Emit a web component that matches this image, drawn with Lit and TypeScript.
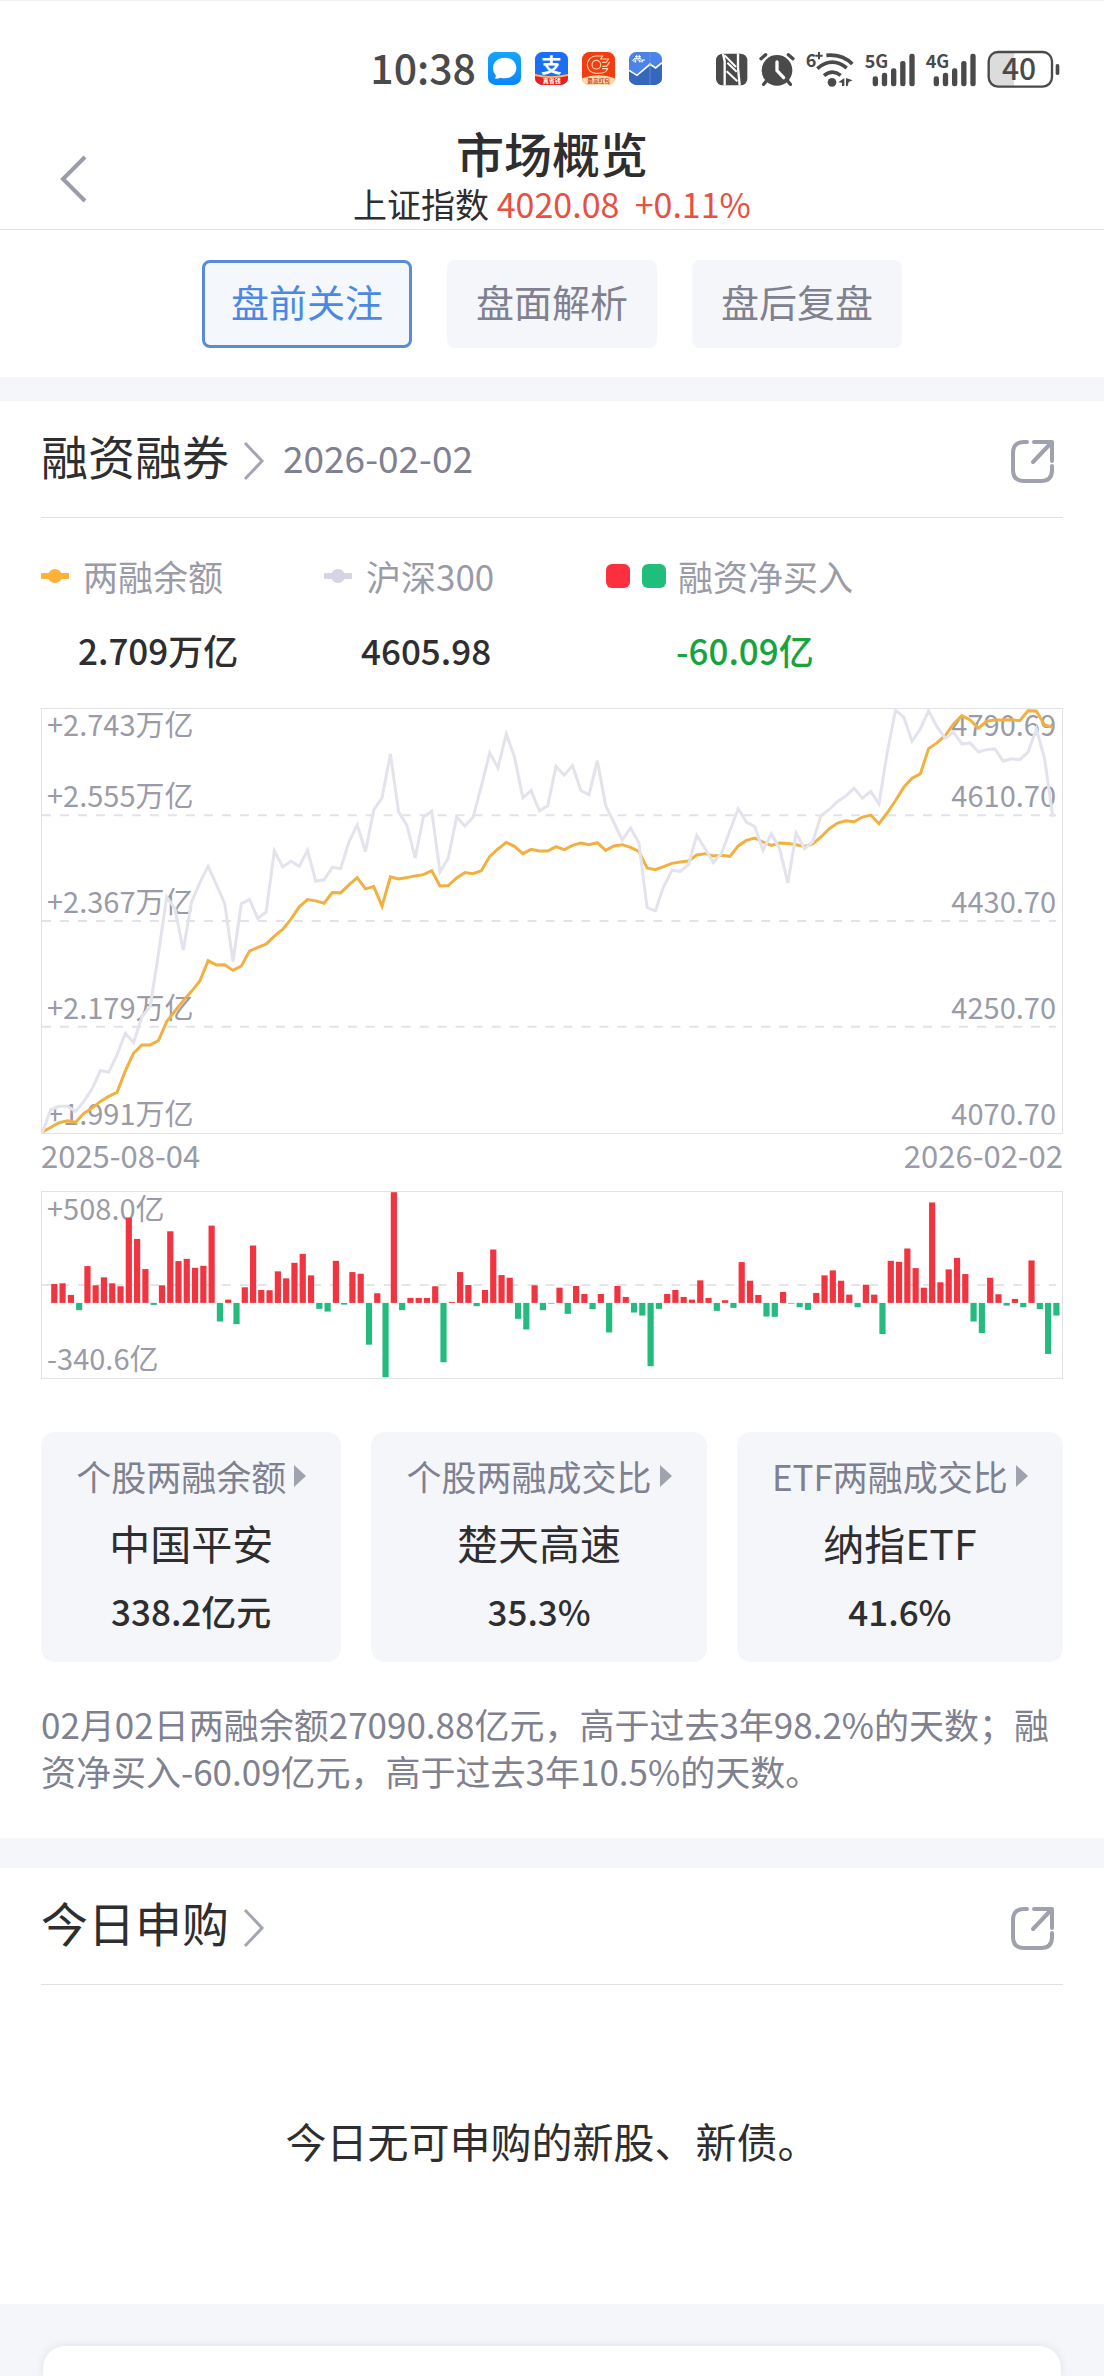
import { LitElement, html, svg, css, nothing } from "lit";
import { customElement, property, state } from "lit/decorators.js";
import { classMap } from "lit/directives/class-map.js";

/* Plot coordinates: both charts share a 1021-unit wide canvas, one sample per trading day. */
const PLOT_WIDTH = 1021;
const STEP = 8.29;
const UNIT = 3;

/* Depth below the top edge of the plot, in thirds of a unit. */
const BALANCE = [
  1272, 1258, 1244, 1238, 1243, 1216, 1200, 1180, 1165, 1153, 1088, 1035, 1010, 1010, 997, 940, 908, 877, 849, 818,
  757, 770, 769, 786, 773, 728, 717, 707, 683, 663, 632, 595, 573, 577, 584, 552, 553, 529, 507, 541,
  534, 593, 505, 511, 507, 502, 498, 486, 532, 531, 508, 492, 495, 486, 443, 421, 401, 413, 435, 422,
  427, 427, 414, 423, 410, 403, 408, 402, 425, 412, 408, 416, 428, 478, 483, 474, 464, 460, 457, 439,
  435, 442, 440, 443, 412, 395, 388, 400, 410, 403, 404, 408, 413, 406, 385, 360, 343, 336, 339, 325,
  319, 345, 312, 275, 235, 208, 195, 119, 102, 80, 45, 20, 33, 58, 37, 33, 33, 32, 35, 5,
  6, 48, 55,
];

const CSI300 = [
  1272, 1205, 1195, 1195, 1210, 1180, 1142, 1087, 1092, 1040, 975, 1003, 925, 895, 735, 565, 600, 725, 580, 522,
  473, 528, 585, 760, 585, 573, 630, 611, 427, 475, 458, 473, 425, 518, 513, 476, 480, 400, 348, 429,
  303, 267, 135, 310, 350, 448, 325, 307, 490, 448, 325, 352, 325, 230, 132, 177, 75, 145, 267, 245,
  306, 291, 173, 199, 170, 245, 258, 155, 290, 342, 394, 358, 401, 597, 607, 535, 485, 488, 468, 380,
  420, 462, 433, 365, 300, 340, 353, 425, 375, 420, 523, 373, 420, 400, 320, 302, 278, 262, 238, 268,
  248, 285, 130, 3, 25, 97, 60, 5, 53, 88, 70, 105, 102, 129, 122, 120, 157, 150, 152, 130,
  60, 150, 325,
];

const NET_BUY = [
  57, 59, 24, -22, 111, 53, 77, 59, 50, 257, 193, 102, -6, 53, 216, 126, 133, 106, 112, 233,
  -56, 10, -64, 47, 173, 39, 38, 95, 74, 121, 148, 83, -18, -26, 127, -5, 93, 88, -126, 29,
  -224, 334, -22, 15, 15, 15, 50, -179, 3, 93, 54, -10, 39, 161, 84, 76, -48, -80, 53, -22,
  -2, 46, -33, 51, 27, -19, 27, -89, 51, 18, -29, -38, -191, -18, 27, 39, 18, 10, 68, 15,
  -24, 8, -15, 123, 67, 24, -41, -42, 33, -2, -13, -21, 30, 83, 98, 67, 25, -13, 55, 25,
  -94, 127, 124, 164, 105, 46, 303, 62, 101, 136, 87, -56, -91, 76, 26, -8, 12, -13, 128, -19,
  -154, -38,
];

const toPoints = (depths: number[]) =>
  depths.map((d, i) => `${(0.5 + i * STEP).toFixed(1)},${(d / UNIT).toFixed(1)}`).join(" ");

const base = css`
  :host {
    display: block;
  }
  *,
  *::before,
  *::after {
    box-sizing: border-box;
  }
  button,
  a {
    font: inherit;
    color: inherit;
    background: none;
    border: 0;
    padding: 0;
    margin: 0;
    text-decoration: none;
    cursor: pointer;
  }
  svg {
    display: block;
    flex: none;
    overflow: visible;
  }
`;

@customElement("status-bar")
class StatusBar extends LitElement {
  static styles = [
    base,
    css`
      .bar {
        display: flex;
        justify-content: flex-end;
        align-items: center;
        height: 116px;
        padding: 20px 43px 0 0;
        border-top: 1px solid #f1f1f1;
        color: #4a4a4a;
      }
      .time {
        font-size: 41px;
        line-height: 60px;
        font-weight: 500;
        padding-bottom: 6px;
      }
      .apps {
        display: flex;
        gap: 14px;
        margin: 0 54px 0 12px;
      }
      .system {
        display: flex;
        gap: 11px;
      }
      text {
        font-family: "Noto Sans CJK SC", sans-serif;
      }
    `,
  ];

  private glyph(x: number, width: number, label: string, body: unknown) {
    return html`<svg
      width=${width / 3}
      height="38"
      viewBox="${x} 54 ${width} 114"
      role="img"
      aria-label=${label}
      fill="#4a4a4a"
    >
      ${body}
    </svg>`;
  }

  private signal(x: number, name: string) {
    const tops = [133, 122, 109, 87, 65];
    return this.glyph(
      x,
      150,
      name,
      svg`
        <text x=${x - 1} y="107" font-size="54" font-weight="700">${name}</text>
        ${tops.map((t, i) => svg`<rect x=${x + 23 + i * 27.5} y=${t} width="16" height=${163 - t} rx="7" />`)}
      `,
    );
  }

  render() {
    return html`
      <div class="bar">
        <span class="time">10:38</span>
        <div class="apps">
          <svg width="33" height="33" viewBox="0 0 99 99">
            <defs>
              <linearGradient id="msg" x1="0" y1="0" x2="0" y2="1">
                <stop offset="0" stop-color="#12a5ff" />
                <stop offset="1" stop-color="#0a86fa" />
              </linearGradient>
            </defs>
            <rect width="99" height="99" rx="22" fill="url(#msg)" />
            <path
              d="M50 17c20 0 35 13 35 31s-15 31-35 31c-5 0-9-1-13-2-5 3-11 4-17 3 3-3 4-7 3-11-5-5-8-12-8-21 0-18 15-31 35-31z"
              fill="#fff"
            />
          </svg>
          <svg width="33" height="33" viewBox="0 0 99 99">
            <defs><clipPath id="pay"><rect width="99" height="99" rx="22" /></clipPath></defs>
            <rect width="99" height="99" rx="22" fill="#1b6ff5" />
            <text x="49" y="62" font-size="62" font-weight="700" fill="#fff" text-anchor="middle">支</text>
            <g clip-path="url(#pay)">
              <path d="M0 66q49 13 99 0v33H0z" fill="#e9201f" />
              <path d="M0 66q49 13 99 0v6q-50 12-99 0z" fill="#ffb469" />
            </g>
            <text x="50" y="94" font-size="18" font-weight="700" fill="#fff" text-anchor="middle">真省钱</text>
          </svg>
          <svg width="33" height="33" viewBox="0 0 99 99">
            <defs><clipPath id="bank"><rect width="99" height="99" rx="22" /></clipPath></defs>
            <g clip-path="url(#bank)">
              <rect width="99" height="99" fill="#f23c12" />
              <g fill="none" stroke="#ffd9b0" stroke-width="3.5" stroke-linecap="round" stroke-linejoin="round">
                <circle cx="43" cy="38" r="13" />
                <path d="M62 12H42a26 26 0 1 0 0 52h10c14 0 22-6 25-14H62M62 12l-6 9h24l-8 10H62M82 31l-8 12H62" />
              </g>
              <path d="M0 79q49-18 99 0v20H0z" fill="#ffdcae" />
            </g>
            <text x="50" y="94" font-size="17" font-weight="700" fill="#d0442a" text-anchor="middle">最高红包</text>
          </svg>
          <svg width="33" height="33" viewBox="0 0 99 99">
            <defs><clipPath id="fund"><rect width="99" height="99" rx="22" /></clipPath></defs>
            <g clip-path="url(#fund)">
              <rect width="99" height="99" fill="#4a84ea" />
              <path d="M0 55L24 70 63 37l17 11 19-16v67H0z" fill="#3567bd" />
              <path d="M63 0v99" stroke="#6f9be8" stroke-width="2" />
              <path d="M0 55L24 70 63 37l17 11 19-16" fill="none" stroke="#fff" stroke-width="5" />
              <circle cx="63" cy="38" r="4" fill="#f2d36b" />
              <path
                d="M18 14h18M23 9v10M31 9v10M10 26l5-5v10M20 22v10M25 24h6v7M36 22v9M40 31v-7h8M15 20h22"
                fill="none"
                stroke="#fff"
                stroke-width="3"
              />
            </g>
          </svg>
        </div>
        <div class="system">
          ${this.glyph(
            48,
            96,
            "NFC",
            svg`<rect x="48" y="65" width="94" height="95" rx="20" />
              <g fill="none" stroke="#fff">
                <path d="M69 65l5 22v73" stroke-width="7" />
                <path d="M74 70l34 35M80 118l32 30M82 92l28 27" stroke-width="6" />
                <path d="M114 65v42l5 53" stroke-width="7" />
              </g>`,
          )}
          ${this.glyph(
            177,
            108,
            "闹钟",
            svg`<circle cx="231" cy="115" r="46" />
              <g fill="none" stroke="#4a4a4a" stroke-width="10" stroke-linecap="round">
                <path d="M183 80l14-12M265 68l14 12M199 147l-8 10M263 147l8 10" />
              </g>
              <path d="M231 90v26l20 21" fill="none" stroke="#fff" stroke-width="10" stroke-linecap="round" />`,
          )}
          ${this.glyph(
            315,
            144,
            "Wi-Fi",
            svg`<text x="314" y="106" font-size="54" font-weight="700">6</text>
              <path d="M343 71h22M354 60v22" stroke="#4a4a4a" stroke-width="6" />
              <g fill="none" stroke="#4a4a4a" stroke-width="11" stroke-linecap="butt">
                <path d="M376 70q48-4 78 26" />
                <path d="M349 110q43-38 88-2" />
                <path d="M369 131q25-21 50-1" />
              </g>
              <circle cx="393" cy="151" r="13" />
              <path d="M430 138v24h-7v-10l-11-1zM435 138l20 7-12 5-3 12h-5z" />`,
          )}
          ${this.signal(489, "5G")} ${this.signal(675, "4G")}
          ${this.glyph(
            861,
            222,
            "电量 40%",
            svg`<path d="M942 60h-50q-28 0-28 28v48q0 28 28 28h50z" fill="#dcdcdc" />
              <rect x="866" y="60" width="190" height="104" rx="28" fill="none" stroke="#4a4a4a" stroke-width="7" />
              <rect x="1067" y="96" width="11" height="33" rx="5" />
              <text x="957" y="145" font-size="90" font-weight="500" text-anchor="middle">40</text>`,
          )}
        </div>
      </div>
    `;
  }
}

@customElement("section-head")
class SectionHead extends LitElement {
  @property() heading = "";
  @property() date = "";

  static styles = [
    base,
    css`
      .head {
        display: flex;
        align-items: center;
        justify-content: space-between;
        height: 117px;
        padding: 4px 8px 0 0;
        border-bottom: 1px solid #e0e1e5;
      }
      .link {
        display: flex;
        align-items: center;
        gap: 14px;
      }
      .title {
        margin: 0;
        padding-bottom: 12px;
        font-size: 47px;
        line-height: 60px;
        font-weight: 400;
        color: #2e2e30;
      }
      .date {
        padding: 0 0 9px 4px;
        font-size: 37px;
        line-height: 48px;
        color: #7f8190;
      }
    `,
  ];

  render() {
    return html`
      <div class="head">
        <a class="link" href="#detail">
          <h2 class="title">${this.heading}</h2>
          <svg width="22" height="38" viewBox="0 0 22 38" fill="none" stroke="#a3a5b2" stroke-width="3">
            <path d="M2 1l17 18L2 37" />
          </svg>
          ${this.date ? html`<span class="date">${this.date}</span>` : nothing}
        </a>
        <button type="button" aria-label="分享">
          <svg width="44" height="44" viewBox="0 0 44 44" fill="none" stroke="#a0a1ae" stroke-width="4">
            <path d="M16 3h-3Q2 3 2 14v17q0 11 11 11h17q11 0 11-11v-4" stroke-linecap="round" />
            <path d="M23 3h18v19M41 3L22 23" stroke-linecap="round" stroke-linejoin="round" />
          </svg>
        </button>
      </div>
    `;
  }
}

@customElement("balance-chart")
class BalanceChart extends LitElement {
  static styles = [
    base,
    css`
      .plot {
        position: relative;
        height: 426px;
        border: 1px solid #e2e3e8;
        font-size: 29px;
        line-height: 28px;
        color: #9a9ba7;
      }
      .layer {
        position: absolute;
        inset: 0;
      }
      .bands {
        display: grid;
        grid-template-rows: repeat(4, 1fr);
        padding: 0 6px 0 5px;
      }
      .band {
        display: flex;
        justify-content: space-between;
        align-items: flex-end;
        padding-bottom: 7px;
      }
      .top {
        display: flex;
        flex-direction: column;
        justify-content: space-between;
        padding-bottom: 7px;
      }
      .row {
        display: flex;
        justify-content: space-between;
      }
      .dates {
        display: flex;
        justify-content: space-between;
        padding-top: 1px;
        font-size: 31px;
        line-height: 40px;
        color: #9a9ba7;
      }
      .canvas {
        width: 100%;
        height: 100%;
      }
    `,
  ];

  render() {
    return html`
      <div class="plot">
        <div class="layer bands">
          <div class="top">
            <div class="row"><span>+2.743万亿</span><span>4790.69</span></div>
            <div class="row"><span>+2.555万亿</span><span>4610.70</span></div>
          </div>
          <div class="band"><span>+2.367万亿</span><span>4430.70</span></div>
          <div class="band"><span>+2.179万亿</span><span>4250.70</span></div>
          <div class="band"><span>+1.991万亿</span><span>4070.70</span></div>
        </div>
        <div class="layer">
          <svg class="canvas" viewBox="0 0 ${PLOT_WIDTH} 425" preserveAspectRatio="none" fill="none">
            <g stroke="#e2e2ea" stroke-width="2" stroke-dasharray="9 9">
              ${[106.5, 212.5, 318.5].map((y) => svg`<path d="M0 ${y}H1015" />`)}
            </g>
            <polyline points=${toPoints(BALANCE)} stroke="#f1b040" stroke-width="3" />
            <polyline points=${toPoints(CSI300)} stroke="#e3e3ee" stroke-width="3" />
          </svg>
        </div>
      </div>
      <div class="dates"><span>2025-08-04</span><span>2026-02-02</span></div>
    `;
  }
}

@customElement("net-buy-chart")
class NetBuyChart extends LitElement {
  static styles = [
    base,
    css`
      .plot {
        position: relative;
        height: 188px;
        border: 1px solid #e2e3e8;
        font-size: 29px;
        line-height: 28px;
        color: #9a9ba7;
      }
      .layer {
        position: absolute;
        inset: 0;
      }
      .axis {
        display: flex;
        flex-direction: column;
        justify-content: space-between;
        padding: 1px 6px 7px 5px;
      }
      .canvas {
        width: 100%;
        height: 100%;
      }
    `,
  ];

  render() {
    const zero = 111.5;
    return html`
      <div class="plot">
        <div class="layer axis"><span>+508.0亿</span><span>-340.6亿</span></div>
        <div class="layer">
          <svg class="canvas" viewBox="0 0 ${PLOT_WIDTH} 187" preserveAspectRatio="none">
            <path d="M0 93.5H1015" stroke="#e4e4ea" stroke-width="2" stroke-dasharray="9 9" />
            ${NET_BUY.map((v, i) => {
              const h = Math.abs(v) / UNIT;
              return svg`<rect
                x=${(9.2 + i * STEP).toFixed(1)}
                y=${(v > 0 ? zero - h : zero).toFixed(1)}
                width="6.2"
                height=${h.toFixed(1)}
                fill=${v > 0 ? "#f13540" : "#26bb7e"}
              />`;
            })}
          </svg>
        </div>
      </div>
    `;
  }
}

@customElement("app-root")
class AppRoot extends LitElement {
  @state() private tab = 0;

  private tabs = ["盘前关注", "盘面解析", "盘后复盘"];
  private stats = [
    { label: "个股两融余额", name: "中国平安", value: "338.2亿元" },
    { label: "个股两融成交比", name: "楚天高速", value: "35.3%" },
    { label: "ETF两融成交比", name: "纳指ETF", value: "41.6%" },
  ];

  static styles = [
    base,
    css`
      :host {
        background: #fff;
        color: #2e2e30;
        font-family: "Noto Sans CJK SC", sans-serif;
      }
      .header {
        display: grid;
        grid-template-columns: 1fr auto 1fr;
        align-items: center;
        padding: 8px 41px 3px;
        border-bottom: 1px solid #e0e0e3;
      }
      .back {
        justify-self: start;
        padding: 8px 16px 0;
      }
      .titles {
        text-align: center;
      }
      .page-title {
        margin: 0;
        font-size: 48px;
        line-height: 57px;
        font-weight: 500;
      }
      .index {
        margin: 0;
        font-size: 34px;
        line-height: 45px;
        white-space: pre;
      }
      .rise {
        color: #e8503f;
      }
      .tabs {
        display: flex;
        justify-content: center;
        gap: 35px;
        padding: 30px 41px 29px;
      }
      .tab {
        padding: 12px 26px 18px;
        border: 3px solid #f5f6fa;
        border-radius: 8px;
        background: #f5f6fa;
        color: #7f8190;
        font-size: 38px;
        line-height: 52px;
      }
      .tab.active {
        border-color: #5b8bd6;
        background: #f4f8fd;
        color: #4c88e3;
      }
      .section {
        padding: 0 41px;
        border-top: 24px solid #f5f6fa;
      }
      .section.later {
        border-top-width: 30px;
      }
      .legend {
        display: grid;
        grid-template-columns: 283fr 282fr 457fr;
        padding: 34px 0;
        font-size: 35px;
        line-height: 48px;
      }
      .key {
        display: flex;
        align-items: center;
        color: #9a9ba7;
      }
      .marker {
        margin-right: 14px;
      }
      .square {
        width: 24px;
        height: 24px;
        margin-right: 12px;
        border-radius: 6px;
        background: #fb2f3e;
      }
      .square.green {
        background: #1fbf7b;
      }
      .reading {
        padding: 26px 0 0 37px;
        font-weight: 500;
      }
      .reading.net {
        padding-left: 70px;
        color: #18a33c;
      }
      .bars {
        margin-top: 16px;
      }
      .stats {
        display: flex;
        gap: 30px;
        margin-top: 53px;
      }
      .stat {
        flex: 1 1 auto;
        display: flex;
        flex-direction: column;
        align-items: center;
        padding: 20px 34px 27px;
        border-radius: 14px;
        background: #f5f6fa;
        font-size: 35px;
        line-height: 48px;
      }
      .stat-label {
        display: flex;
        align-items: center;
        gap: 8px;
        color: #7f8190;
      }
      .stat-name {
        padding: 12px 0 15px;
        font-size: 41px;
        line-height: 60px;
      }
      .stat-value {
        font-weight: 500;
      }
      .note {
        margin: 0;
        padding: 38px 0 44px;
        font-size: 35px;
        line-height: 47px;
        color: #7f8190;
      }
      .empty {
        margin: 0;
        padding: 125px 0 134px;
        text-align: center;
        font-size: 41px;
        line-height: 60px;
      }
      .tail {
        padding: 42px 43px 0;
        background: #f5f6fa;
        overflow: hidden;
      }
      .next-card {
        height: 30px;
        border-radius: 22px 22px 0 0;
        background: #fff;
        box-shadow: 0 0 8px rgba(60, 65, 90, 0.12);
      }
    `,
  ];

  private marker(color: string) {
    return html`<svg class="marker" width="28" height="16" viewBox="0 0 28 16" fill=${color}>
      <rect y="5" width="28" height="6" rx="1" />
      <circle cx="14" cy="8" r="7" />
    </svg>`;
  }

  render() {
    return html`
      <status-bar></status-bar>
      <header class="header">
        <button class="back" type="button" aria-label="返回">
          <svg width="30" height="48" viewBox="0 0 30 48" fill="none" stroke="#9b9ca9" stroke-width="4">
            <path d="M28 2L6 24l22 22" />
          </svg>
        </button>
        <div class="titles">
          <h1 class="page-title">市场概览</h1>
          <p class="index">上证指数 <span class="rise">4020.08  +0.11%</span></p>
        </div>
      </header>
      <nav class="tabs">
        ${this.tabs.map(
          (name, i) => html`<button
            type="button"
            class=${classMap({ tab: true, active: i === this.tab })}
            @click=${() => (this.tab = i)}
          >
            ${name}
          </button>`,
        )}
      </nav>

      <section class="section">
        <section-head heading="融资融券" date="2026-02-02"></section-head>
        <div class="legend">
          <div>
            <div class="key">${this.marker("#fdb138")}两融余额</div>
            <div class="reading">2.709万亿</div>
          </div>
          <div>
            <div class="key">${this.marker("#d4d4e4")}沪深300</div>
            <div class="reading">4605.98</div>
          </div>
          <div>
            <div class="key"><span class="square"></span><span class="square green"></span>融资净买入</div>
            <div class="reading net">-60.09亿</div>
          </div>
        </div>
        <balance-chart></balance-chart>
        <net-buy-chart class="bars"></net-buy-chart>
        <div class="stats">
          ${this.stats.map(
            (s) => html`<a class="stat" href="#stat">
              <span class="stat-label">
                ${s.label}
                <svg width="12" height="22" viewBox="0 0 12 22" fill="#a0a3ae"><path d="M0 0l12 11L0 22z" /></svg>
              </span>
              <span class="stat-name">${s.name}</span>
              <span class="stat-value">${s.value}</span>
            </a>`,
          )}
        </div>
        <p class="note">
          02月02日两融余额27090.88亿元，高于过去3年98.2%的天数；融资净买入-60.09亿元，高于过去3年10.5%的天数。
        </p>
      </section>

      <section class="section later">
        <section-head heading="今日申购"></section-head>
        <p class="empty">今日无可申购的新股、新债。</p>
      </section>

      <div class="tail"><div class="next-card"></div></div>
    `;
  }
}
